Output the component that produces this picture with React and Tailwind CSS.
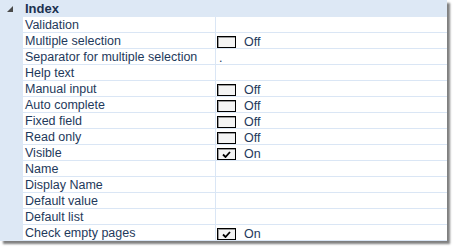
import React from 'react';

const ROWS = [
  { label: 'Validation' },
  { label: 'Multiple selection', check: false },
  { label: 'Separator for multiple selection', value: '.' },
  { label: 'Help text' },
  { label: 'Manual input', check: false },
  { label: 'Auto complete', check: false },
  { label: 'Fixed field', check: false },
  { label: 'Read only', check: false },
  { label: 'Visible', check: true },
  { label: 'Name' },
  { label: 'Display Name' },
  { label: 'Default value' },
  { label: 'Default list' },
  { label: 'Check empty pages', check: true },
];

const Check = ({ on }) => (
  <div className="flex items-center">
    <div className="w-[19px] h-[12px] border border-black bg-[#f4f4f4] shadow-[inset_1px_1px_0_#9a9a9a] flex items-center justify-center">
      {on && (
        <svg width="9" height="7" viewBox="0 0 9 7">
          <path d="M1 3.5 L3.5 6 L8 1" stroke="#000" strokeWidth="1.8" fill="none" />
        </svg>
      )}
    </div>
    <span className="ml-[8px]">{on ? 'On' : 'Off'}</span>
  </div>
);

export default function App() {
  return (
    <div className="w-[454px] h-[248px] bg-white font-['Liberation_Sans',Arial,sans-serif] text-[12.5px] text-[#1e395b]">
      <div className="w-[447px] h-[241px] bg-white shadow-[3px_3px_2px_rgba(0,0,0,0.5)] flex flex-col">
        <div className="h-[17px] bg-[#dde8f5] flex items-center shrink-0">
          <svg width="6" height="6" viewBox="0 0 6 6" className="ml-[7px] mt-[1px]">
            <path d="M6 0 L6 6 L0 6 Z" fill="#4a4a4a" />
          </svg>
          <span className="ml-[12px] font-bold text-[13px] text-[#1b3150]">Index</span>
        </div>
        <div className="flex flex-1">
          <div className="w-[23px] bg-[#dde8f5] shrink-0" />
          <div className="flex-1 flex flex-col">
            {ROWS.map((r) => (
              <div key={r.label} className="h-[16px] flex border-b border-[#dae6f5] leading-[16px]">
                <div className="w-[193px] pl-[2px] border-r border-[#dae6f5] whitespace-nowrap overflow-hidden">{r.label}</div>
                <div className="flex-1 pl-[1px] pt-[1px]">
                  {r.check !== undefined ? <Check on={r.check} /> : <span className="pl-[2px]">{r.value}</span>}
                </div>
              </div>
            ))}
          </div>
        </div>
      </div>
    </div>
  );
}
